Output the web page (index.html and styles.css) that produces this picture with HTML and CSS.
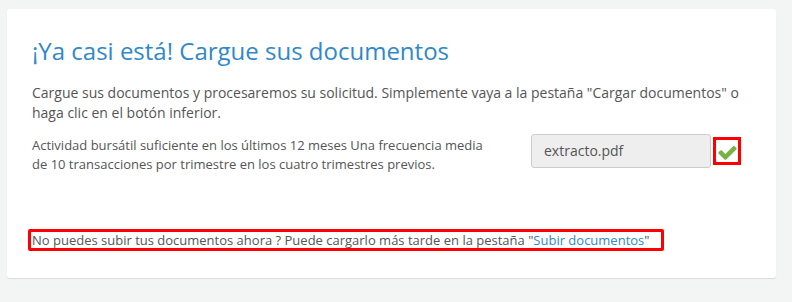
FILE: index.html
```html
<!DOCTYPE html>
<html lang="es">
<head>
<meta charset="utf-8">
<link rel="stylesheet" href="styles.css">
</head>
<body>
<div class="card">
  <h1 class="title">¡Ya casi está! Cargue sus documentos</h1>
  <p class="intro">Cargue sus documentos y procesaremos su solicitud. Simplemente vaya a la pestaña "Cargar documentos" o haga clic en el botón inferior.</p>
  <div class="doc-row">
    <div class="doc-text">Actividad bursátil suficiente en los últimos 12 meses Una frecuencia media de 10 transacciones por trimestre en los cuatro trimestres previos.</div>
    <div class="doc-upload">
      <div class="file-box">extracto.pdf</div>
      <span class="check">
        <svg viewBox="0 0 1792 1792" width="21" height="21"><path fill="#78b243" d="M1671 566q0 40-28 68l-724 724-136 136q-28 28-68 28t-68-28l-136-136-362-362q-28-28-28-68t28-68l136-136q28-28 68-28t68 28l294 295 656-657q28-28 68-28t68 28l136 136q28 28 28 68z"/></svg>
      </span>
    </div>
  </div>
  <div class="later"><span>No puedes subir tus documentos ahora ? Puede cargarlo más tarde en la pestaña "<a class="link" href="#">Subir documentos</a>"</span></div>
</div>
</body>
</html>
```
FILE: styles.css
```css
html, body {
  margin: 0;
  padding: 0;
}
body {
  background: #f3f4f4;
  font-family: "Open Sans", "Liberation Sans", sans-serif;
  color: #555;
  width: 792px;
  height: 302px;
  overflow: hidden;
}
.card {
  box-sizing: border-box;
  margin: 9px 0 0 7px;
  width: 769px;
  height: 269px;
  background: #fff;
  border-radius: 3px;
  box-shadow: 0 1px 1px rgba(0,0,0,0.1);
  padding: 27px 35px 0 25px;
}
.title {
  margin: 0;
  font-size: 24px;
  font-weight: 400;
  line-height: 30px;
  color: #3088c8;
}
.intro {
  margin: 17px 0 0 0;
  font-size: 14px;
  line-height: 20px;
  color: #555;
}
.doc-row {
  display: flex;
  align-items: flex-start;
  margin-top: 13px;
}
.doc-text {
  width: 460px;
  font-size: 13px;
  line-height: 19px;
}
.doc-upload {
  margin-left: auto;
  display: flex;
  align-items: center;
  gap: 2px;
  margin-top: -2px;
}
.file-box {
  box-sizing: border-box;
  width: 180px;
  height: 34px;
  background: #eee;
  border: 1px solid #ccc;
  border-radius: 3px;
  padding: 0 12px;
  font-size: 14px;
  line-height: 32px;
  color: #555;
}
.check {
  box-sizing: border-box;
  width: 28px;
  height: 28px;
  border: 3px solid #f00;
  display: flex;
  align-items: center;
  justify-content: center;
  padding-top: 3px;
}
.check svg {
  display: block;
}
.later {
  margin-top: 54px;
  margin-left: -4px;
}
.later span {
  display: inline-block;
  border: 3px solid #f00;
  border-radius: 2px;
  padding: 0 12px 0 1px;
  font-size: 13px;
  line-height: 16px;
}
.link {
  color: #3088c8;
  text-decoration: none;
}
```
